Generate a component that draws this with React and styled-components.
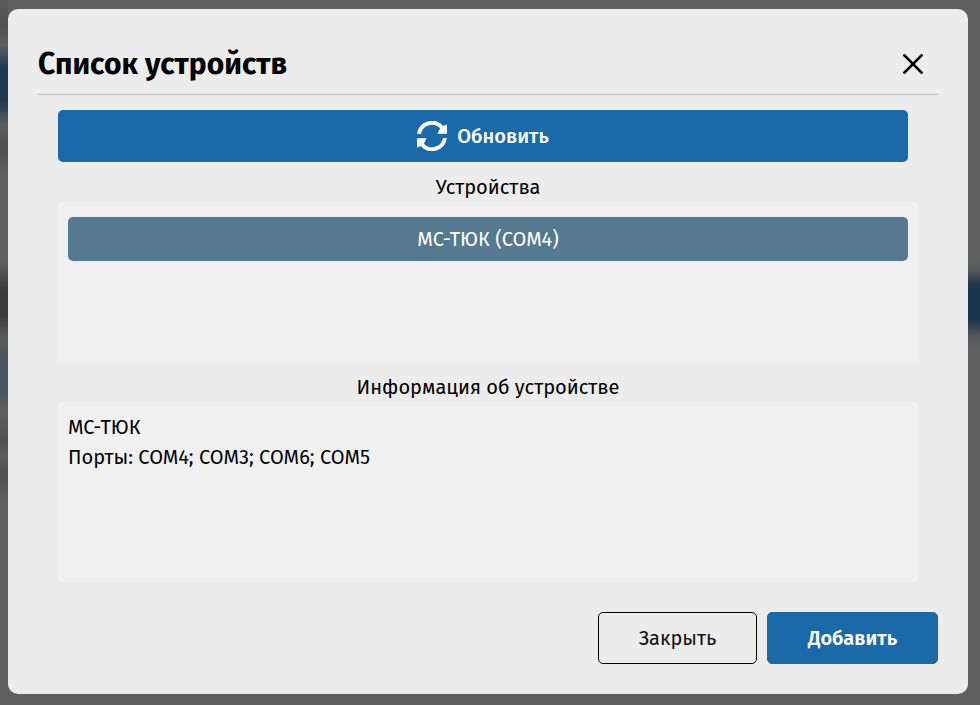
import React from "react";
import styled, { createGlobalStyle } from "styled-components";

const Global = createGlobalStyle`
  * { box-sizing: border-box; }
  body { margin: 0; background: #5f5f5f; overflow: hidden; }
  button { font: inherit; margin: 0; padding: 0; border: 0; background: none; cursor: pointer; }
`;

const Backdrop = styled.div`
  width: 980px;
  height: 705px;
  padding: 9px 12px 11px 8px;
  font-family: "Fira Sans", "Noto Sans", sans-serif;
  font-size: 20px;
  color: #000;
  background:
    linear-gradient(#5f5f5f 0, #5f5f5f 262px, #50565a 272px, #1c364b 285px, #1c364b 320px, #50565a 335px, #5f5f5f 346px) right / 12px 100% no-repeat,
    linear-gradient(#5a5a5a 0, #505050 25px, #5e5e5e 45px, #1c3a54 68px, #1f3a50 102px, #5e5e5e 124px,
      #505050 148px, #5f5f5f 175px, #5f5f5f 262px, #3b3b3b 290px, #3b3b3b 315px, #5a5a5a 338px, #4a545e 365px,
      #4a545e 390px, #5f5f5f 413px, #505050 440px, #5c5c5c 456px, #505050 476px, #5f5f5f 500px) left / 8px 100% no-repeat,
    #5f5f5f;
`;

const Modal = styled.section`
  width: 960px;
  height: 685px;
  padding: 0 30px 30px;
  border-radius: 10px;
  background: #ececec;
  display: flex;
  flex-direction: column;
`;

const Header = styled.header`
  height: 86px;
  padding: 24px 10px 0 0;
  border-bottom: 1px solid #bfbfbf;
  display: flex;
  align-items: center;
  justify-content: space-between;
`;

const Title = styled.h1`
  margin: 0;
  font-size: 30px;
  font-weight: 700;
  line-height: 40px;
`;

const CloseIconButton = styled.button`
  width: 30px;
  height: 30px;
  display: grid;
  place-items: center;
`;

const Content = styled.main`
  width: 860px;
  margin: 15px 0 0 20px;
  display: flex;
  flex-direction: column;
`;

const RefreshButton = styled.button`
  width: 850px;
  height: 52px;
  border-radius: 5px;
  background: #1a6aaa;
  color: #fff;
  font-weight: 500;
  display: flex;
  align-items: center;
  justify-content: center;
  gap: 10px;
`;

const Caption = styled.h2`
  margin: 0;
  padding-top: 10px;
  height: 40px;
  font-size: inherit;
  font-weight: 400;
  line-height: 30px;
  text-align: center;
`;

const Panel = styled.div`
  height: ${(p) => p.$height}px;
  padding: ${(p) => p.$top}px 10px 0;
  border-radius: 5px;
  background: #f0f0f0;
`;

const DeviceButton = styled.button`
  width: 100%;
  height: 44px;
  border-radius: 5px;
  background: #557a8f;
  color: #fff;
  font-weight: 400;
`;

const InfoLine = styled.p`
  margin: 0;
  line-height: 30px;
`;

const Footer = styled.footer`
  margin-top: auto;
  display: flex;
  justify-content: flex-end;
  gap: 10px;
`;

const FooterButton = styled.button`
  width: ${(p) => (p.$primary ? 171 : 159)}px;
  height: 52px;
  border: 1px solid ${(p) => (p.$primary ? "#1a6aaa" : "#000")};
  border-radius: 5px;
  background: ${(p) => (p.$primary ? "#1a6aaa" : "transparent")};
  color: ${(p) => (p.$primary ? "#fff" : "#111")};
  font-weight: ${(p) => (p.$primary ? 600 : 400)};
`;

const RefreshIcon = () => (
  <svg width="30" height="30" viewBox="0 0 30 30">
    <path d="M.1 13A15 15 0 0 1 26.2 5L30 3.5V12.8H20.5L23.2 7.3A11.2 11.2 0 0 0 4 13Z" fill="#fff" />
    <path d="M29.9 17A15 15 0 0 1 3.8 25L0 26.5V17.2H9.5L6.8 22.7A11.2 11.2 0 0 0 26 17Z" fill="#fff" />
  </svg>
);

const CloseIcon = () => (
  <svg width="20" height="20" viewBox="0 0 20 20">
    <path d="M1.4 1.4 18.6 18.6M18.6 1.4 1.4 18.6" stroke="#000" strokeWidth="2.7" strokeLinecap="round" />
  </svg>
);

export default function App() {
  return (
    <>
      <Global />
      <Backdrop>
        <Modal>
          <Header>
            <Title>Список устройств</Title>
            <CloseIconButton aria-label="Закрыть"><CloseIcon /></CloseIconButton>
          </Header>
          <Content>
            <RefreshButton><RefreshIcon />Обновить</RefreshButton>
            <Caption>Устройства</Caption>
            <Panel $height={160} $top={15}>
              <DeviceButton>МС-ТЮК (COM4)</DeviceButton>
            </Panel>
            <Caption>Информация об устройстве</Caption>
            <Panel $height={180} $top={10}>
              <InfoLine>МС-ТЮК</InfoLine>
              <InfoLine>Порты: COM4; COM3; COM6; COM5</InfoLine>
            </Panel>
          </Content>
          <Footer>
            <FooterButton>Закрыть</FooterButton>
            <FooterButton $primary>Добавить</FooterButton>
          </Footer>
        </Modal>
      </Backdrop>
    </>
  );
}
